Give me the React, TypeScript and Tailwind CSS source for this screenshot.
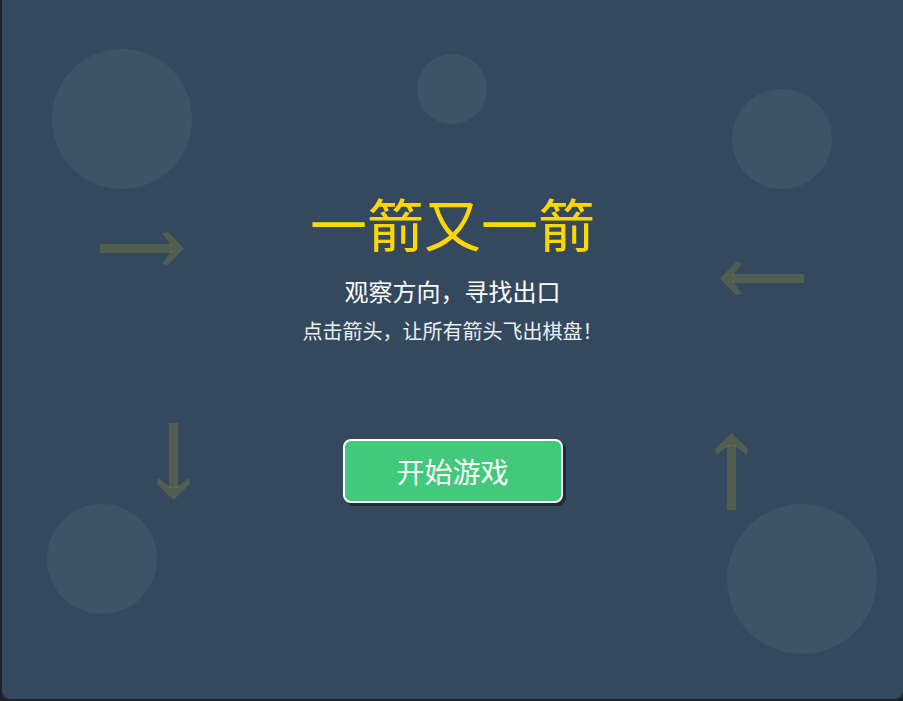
import React from "react";

type Dir = "right" | "left" | "up" | "down";

function Arrow({ dir, len, className }: { dir: Dir; len: number; className: string }) {
  const h = 33;
  const L = len;
  const head = `M${L} 16.5 L${L - 16} 0 L${L - 22} 1 Q${L - 14} 11 ${L - 12} 16.5 Q${L - 14} 22 ${L - 22} 32 L${L - 16} 33 Z`;
  const horizontal = dir === "right" || dir === "left";
  const transform =
    dir === "right"
      ? ""
      : dir === "left"
        ? `translate(${L},${h}) rotate(180)`
        : dir === "down"
          ? `translate(${h},0) rotate(90)`
          : `translate(0,${L}) rotate(-90)`;
  return (
    <svg
      className={className}
      width={horizontal ? L : h}
      height={horizontal ? h : L}
      viewBox={horizontal ? `0 0 ${L} ${h}` : `0 0 ${h} ${L}`}>
      <g transform={transform} fill="rgba(255,215,0,0.15)">
        <rect x={0} y={12} width={L - 12} height={9} />
        <path d={head} />
      </g>
    </svg>
  );
}

export default function App() {
  return (
    <div className="w-[903px] h-[701px] bg-[#1f2326] overflow-hidden">
      <div
        className="relative ml-[2px] h-[699px] bg-[#34495e] rounded-b-lg overflow-hidden flex flex-col items-center"
        style={{ fontFamily: '"Noto Sans CJK SC", "Noto Sans", sans-serif' }}>
        {/* background bubbles */}
        <div className="absolute left-[50px] top-[49px] w-[140px] h-[140px] rounded-full bg-white/[0.06]" />
        <div className="absolute left-[415px] top-[54px] w-[70px] h-[70px] rounded-full bg-white/[0.06]" />
        <div className="absolute left-[730px] top-[89px] w-[100px] h-[100px] rounded-full bg-white/[0.06]" />
        <div className="absolute left-[45px] top-[504px] w-[110px] h-[110px] rounded-full bg-white/[0.06]" />
        <div className="absolute left-[725px] top-[504px] w-[150px] h-[150px] rounded-full bg-white/[0.06]" />

        {/* floating arrows */}
        <Arrow dir="right" len={84} className="absolute left-[98px] top-[232px]" />
        <Arrow dir="left" len={84} className="absolute left-[718px] top-[262px]" />
        <Arrow dir="down" len={77} className="absolute left-[155px] top-[423px]" />
        <Arrow dir="up" len={77} className="absolute left-[713px] top-[433px]" />

        <div className="relative flex flex-col items-center pt-[194px]">
          <h1 className="text-[57px] leading-none text-[#ffd700]">一箭又一箭</h1>
          <p className="mt-[28px] text-[24px] leading-none text-white">观察方向，寻找出口</p>
          <p className="mt-[18px] text-[20px] leading-none text-[#ecf0f1]">点击箭头，让所有箭头飞出棋盘！</p>
          <button className="mt-[98px] w-[220px] h-[64px] rounded-lg border-2 border-white bg-[#42c97c] text-white text-[28px] shadow-[3px_3px_0_#1f2b38]">
            开始游戏
          </button>
        </div>
      </div>
    </div>
  );
}
